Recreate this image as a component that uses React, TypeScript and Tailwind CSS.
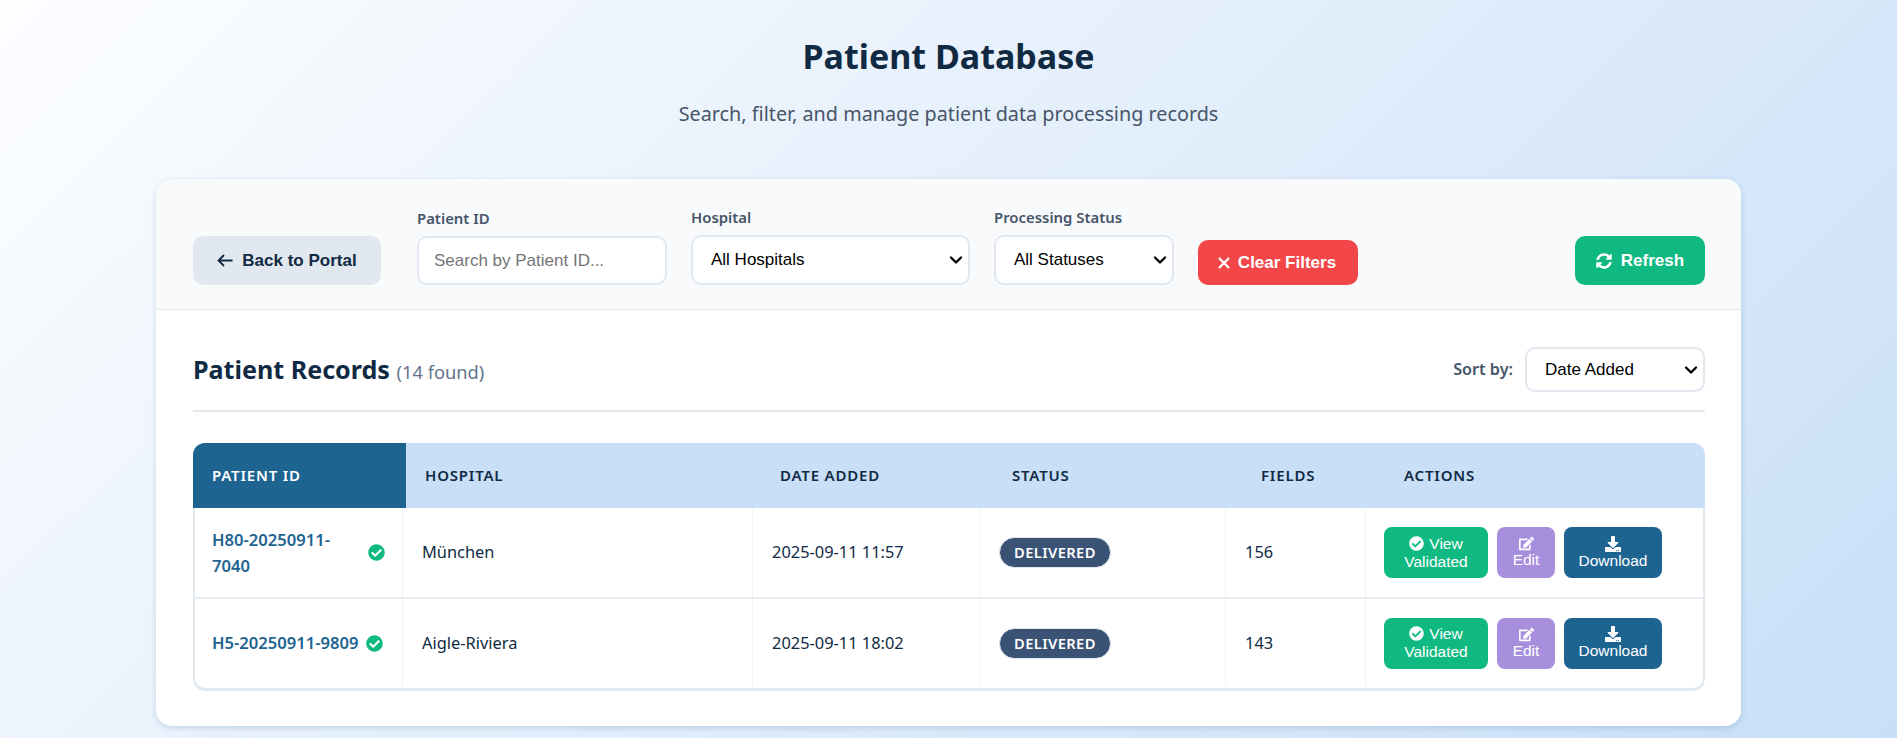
import { ChevronDown } from "lucide-react";
import { FaCheckCircle, FaDownload, FaEdit, FaSyncAlt } from "react-icons/fa";

const UI_FONT = "font-['Noto_Sans',sans-serif]";
const CTRL_FONT = "font-['Liberation_Sans',sans-serif]";

const RECORDS = [
  { id: "H80-20250911-7040", hospital: "München", date: "2025-09-11 11:57", fields: 156, iconClass: "ml-auto" },
  { id: "H5-20250911-9809", hospital: "Aigle-Riviera", date: "2025-09-11 18:02", fields: 143, iconClass: "ml-[7px]" },
];

const HEADERS = ["HOSPITAL", "DATE ADDED", "STATUS", "FIELDS", "ACTIONS"];

const fieldClass = `w-full rounded-[10px] border-2 border-[#e2e8f0] bg-white text-[17px] text-black ${CTRL_FONT}`;

function Filter({ label, width, children }: { label: string; width: string; children: React.ReactNode }) {
  return (
    <div className={`flex flex-col ${width}`}>
      <label className={`mb-[8px] text-[14.9px] leading-[20px] font-semibold text-[#475569] ${UI_FONT}`}>{label}</label>
      {children}
    </div>
  );
}

function Select({ value, height }: { value: string; height: string }) {
  return (
    <div className="relative">
      <select className={`${fieldClass} ${height} appearance-none px-[18px]`}>
        <option>{value}</option>
      </select>
      {/* chevron sits over the select */}
      <ChevronDown size={20} strokeWidth={2.8} className="pointer-events-none absolute top-1/2 right-[4px] -translate-y-1/2 text-black" />
    </div>
  );
}

export default function App() {
  return (
    <div className={`h-screen overflow-hidden bg-[linear-gradient(135deg,#fcfdff_0%,#c8dff7_100%)] ${UI_FONT}`}>
      <header className="pt-[32px] text-center">
        <h1 className="text-[34px] leading-[48px] font-bold text-[#102a43]">Patient Database</h1>
        <p className="mt-[22px] text-[19.8px] leading-[24px] text-[#475569]">Search, filter, and manage patient data processing records</p>
      </header>

      <main className="mx-[156px] mt-[53px] h-[547px] overflow-hidden rounded-[16px] bg-white shadow-[0_2px_6px_rgba(30,80,140,0.18)]">
        <div className="flex h-[131px] items-end border-b border-[#e2e8f0] bg-[#f8fafc] pr-[36px] pb-[24px] pl-[37px]">
          <button className={`mr-[36px] flex h-[49px] w-[188px] items-center justify-center gap-[9px] rounded-[10px] bg-[#e2e8f0] text-[17px] font-bold text-[#102a43] ${CTRL_FONT}`}>
            <svg width="16" height="13" viewBox="0 0 16 13" fill="none" stroke="currentColor" strokeWidth="1.8">
              <path d="M15.5 6.5H1.5M7 1L1.5 6.5L7 12" />
            </svg>
            Back to Portal
          </button>
          <div className="flex items-end gap-[24px]">
            <Filter label="Patient ID" width="w-[250px]">
              <input className={`${fieldClass} h-[49px] px-[15px] outline-none placeholder:text-[#757575]`} placeholder="Search by Patient ID..." />
            </Filter>
            <Filter label="Hospital" width="w-[279px]">
              <Select value="All Hospitals" height="h-[50px]" />
            </Filter>
            <Filter label="Processing Status" width="w-[180px]">
              <Select value="All Statuses" height="h-[50px]" />
            </Filter>
            <button className={`flex h-[45px] w-[160px] items-center justify-center gap-[8px] rounded-[10px] bg-[#f24648] pr-[2px] text-[17px] font-bold text-white ${CTRL_FONT}`}>
              <svg width="12" height="12" viewBox="0 0 12 12" fill="none" stroke="currentColor" strokeWidth="2.4">
                <path d="M1 1L11 11M11 1L1 11" />
              </svg>
              Clear Filters
            </button>
          </div>
          <button className={`ml-auto flex h-[49px] w-[130px] items-center justify-center gap-[9px] rounded-[10px] bg-[#10b981] text-[17px] font-bold text-white ${CTRL_FONT}`}>
            <FaSyncAlt className="text-[16px]" />
            Refresh
          </button>
        </div>

        <div className="pt-[30px] pr-[36px] pl-[37px]">
          <div className="flex h-[72px] items-start justify-between border-b-2 border-[#e2e8f0]">
            <h2 className="mt-[11px] text-[25.1px] leading-[36px] font-bold text-[#102a43]">
              Patient Records <span className="text-[18.3px] font-normal text-[#64748b]">(14 found)</span>
            </h2>
            <div className="mt-[7px] flex items-center gap-[12px]">
              <span className="text-[16.2px] font-semibold text-[#475569]">Sort by:</span>
              <div className="w-[180px]">
                <Select value="Date Added" height="h-[45px]" />
              </div>
            </div>
          </div>

          <div className="mt-[31px] overflow-hidden rounded-[12px]">
            <div className="grid h-[65px] grid-cols-[213px_355px_232px_249px_143px_1fr] items-center bg-[#c8dff7] text-[15px] font-semibold tracking-[0.8px] text-[#102a43]">
              <div className="flex h-full items-center bg-[#1e6491] pl-[19px] text-white">PATIENT ID</div>
              {HEADERS.map((h) => (
                <div key={h} className="pl-[19px]">{h}</div>
              ))}
            </div>
            <div className="rounded-b-[12px] border-x-2 border-b-[3px] border-[#e2e8f0]">
              {RECORDS.map((r, i) => (
                <div key={r.id} className={`grid grid-cols-[207px_350px_227px_246px_140px_1fr] text-[16.4px] text-[#102a43] ${i === 0 ? "h-[91px] border-b-2 border-[#e9edf3]" : "h-[89px] pb-[1px]"}`}>
                  <div className="flex items-center pr-[17px] pl-[17px] text-[16.6px] leading-[26px] font-semibold text-[#1e6491]">
                    <span className={i === 0 ? "w-[130px]" : ""}>{r.id}</span>
                    <FaCheckCircle className={`shrink-0 text-[17px] text-[#10b981] ${r.iconClass}`} />
                  </div>
                  <div className="flex items-center border-l border-[#f1f5f9] pl-[19px]">{r.hospital}</div>
                  <div className="flex items-center border-l border-[#f1f5f9] pl-[19px]">{r.date}</div>
                  <div className="flex items-center border-l border-[#f1f5f9] pl-[19px]">
                    <span className="flex h-[31px] items-center rounded-full border border-[#e2e8f0] bg-[#3a5273] px-[14px] text-[14.7px] font-semibold tracking-[0.4px] text-white">DELIVERED</span>
                  </div>
                  <div className="flex items-center border-l border-[#f1f5f9] pl-[19px]">{r.fields}</div>
                  <div className={`flex items-center gap-[9px] border-l border-[#f1f5f9] pl-[18px] text-center text-[15.5px] leading-[18px] text-white ${CTRL_FONT}`}>
                    <button className="h-[51px] w-[104px] rounded-[8px] bg-[#10b981] px-[10px] text-center">
                      <FaCheckCircle className="mr-[5px] inline align-[-2px] text-[15px]" />View Validated
                    </button>
                    <button className="flex h-[51px] w-[58px] flex-col items-center justify-center rounded-[8px] bg-[#a78fdd]">
                      <FaEdit className="text-[15px]" />Edit
                    </button>
                    <button className="flex h-[51px] w-[98px] flex-col items-center justify-center rounded-[8px] bg-[#1e6491]">
                      <FaDownload className="text-[16px]" />Download
                    </button>
                  </div>
                </div>
              ))}
            </div>
          </div>
        </div>
      </main>
    </div>
  );
}
